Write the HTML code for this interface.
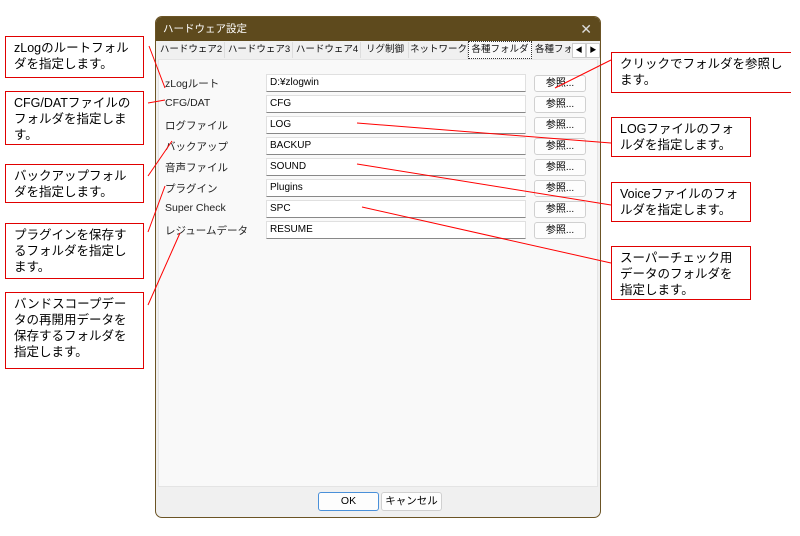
<!DOCTYPE html>
<html><head><meta charset="utf-8"><style>
body{margin:0;width:800px;height:536px;background:#fff;position:relative;overflow:hidden;font-family:"Liberation Sans","Noto Sans CJK JP",sans-serif;}
.box{position:absolute;border:1px solid #e00000;font-size:12.5px;line-height:16px;padding:3px 0 0 8px;box-sizing:border-box;color:#000;background:#fff;white-space:nowrap;overflow:hidden}
.dlg{position:absolute;left:155px;top:16px;width:446px;height:502px;border:1px solid #6b5425;border-radius:7px;background:#f0f0f0;box-sizing:border-box;overflow:hidden}
.title{height:24px;background:#5e4a1d;color:#fff;font-size:10.5px;line-height:24px;padding-left:7px;position:relative}
.title .x{position:absolute;right:8px;top:0;font-size:14px;color:#ddd}
.tabs{position:absolute;top:25px;left:2px;height:17px;font-size:9.5px;white-space:nowrap}
.tab{position:absolute;top:0;height:16px;line-height:16px;border-right:1px solid #ddd;color:#111;text-align:center;overflow:hidden}
.panel{position:absolute;left:2px;top:42px;width:438px;height:426px;background:#f9f9f9;border:1px solid #e4e4e4}
.lbl{position:absolute;left:6px;font-size:10.5px;color:#222}
.inp{position:absolute;left:107px;width:260px;height:18px;background:#fff;border:1px solid #e0e0e0;border-bottom:1px solid #888;box-sizing:border-box;font-size:10px;line-height:16px;padding-left:3px}
.btn{position:absolute;left:375px;width:52px;height:17px;background:#fdfdfd;border:1px solid #d0d0d0;border-radius:3px;box-sizing:border-box;font-size:10px;text-align:center;line-height:15px}
.fb{position:absolute;top:475px;height:19px;border-radius:3px;box-sizing:border-box;font-size:10.5px;text-align:center;line-height:17px;background:#fdfdfd}
</style></head><body>
<div class="dlg">
<div class="title">ハードウェア設定<span class="x">✕</span></div>
<div class="tabs">
<span class="tab" style="left:0px;width:66px">ハードウェア2</span>
<span class="tab" style="left:68px;width:66px">ハードウェア3</span>
<span class="tab" style="left:136px;width:66px">ハードウェア4</span>
<span class="tab" style="left:204px;width:46px">リグ制御</span>
<span class="tab" style="left:252px;width:57px">ネットワーク</span>
<span class="tab" style="left:310px;width:62px;border:1px dotted #333;background:#f9f9f9;top:-1px">各種フォルダ</span>
<span class="tab" style="left:377px;width:36px;border:none;text-align:left">各種フォ</span>
<span style="position:absolute;left:414px;top:1px;width:12px;height:13px;border:1px solid #ccc;background:#fff;font-size:7px;text-align:center;line-height:13px">◀</span>
<span style="position:absolute;left:428px;top:1px;width:12px;height:13px;border:1px solid #ccc;background:#fff;font-size:7px;text-align:center;line-height:13px">▶</span>
</div>
<div class="panel">
<div class="lbl" style="top:16px">zLogルート</div><div class="inp" style="top:14px">D:¥zlogwin</div><div class="btn" style="top:15px">参照...</div>
<div class="lbl" style="top:37px">CFG/DAT</div><div class="inp" style="top:35px">CFG</div><div class="btn" style="top:36px">参照...</div>
<div class="lbl" style="top:58px">ログファイル</div><div class="inp" style="top:56px">LOG</div><div class="btn" style="top:57px">参照...</div>
<div class="lbl" style="top:79px">バックアップ</div><div class="inp" style="top:77px">BACKUP</div><div class="btn" style="top:78px">参照...</div>
<div class="lbl" style="top:100px">音声ファイル</div><div class="inp" style="top:98px">SOUND</div><div class="btn" style="top:99px">参照...</div>
<div class="lbl" style="top:121px">プラグイン</div><div class="inp" style="top:119px">Plugins</div><div class="btn" style="top:120px">参照...</div>
<div class="lbl" style="top:142px">Super Check</div><div class="inp" style="top:140px">SPC</div><div class="btn" style="top:141px">参照...</div>
<div class="lbl" style="top:163px">レジュームデータ</div><div class="inp" style="top:161px">RESUME</div><div class="btn" style="top:162px">参照...</div>
</div>
<div class="fb" style="left:162px;width:61px;border:1px solid #4a90d9">OK</div>
<div class="fb" style="left:225px;width:61px;border:1px solid #d0d0d0">キャンセル</div>
</div>
<div class="box" style="left:5px;top:36px;width:139px;height:42px">zLogのルートフォル<br>ダを指定します。</div>
<div class="box" style="left:5px;top:91px;width:139px;height:54px">CFG/DATファイルの<br>フォルダを指定しま<br>す。</div>
<div class="box" style="left:5px;top:164px;width:139px;height:39px">バックアップフォル<br>ダを指定します。</div>
<div class="box" style="left:5px;top:223px;width:139px;height:56px">プラグインを保存す<br>るフォルダを指定し<br>ます。</div>
<div class="box" style="left:5px;top:292px;width:139px;height:77px">バンドスコープデー<br>タの再開用データを<br>保存するフォルダを<br>指定します。</div>
<div class="box" style="left:611px;top:52px;width:180px;height:41px;border-right:none">クリックでフォルダを参照し<br>ます。</div>
<div class="box" style="left:611px;top:117px;width:140px;height:40px">LOGファイルのフォ<br>ルダを指定します。</div>
<div class="box" style="left:611px;top:182px;width:140px;height:40px">Voiceファイルのフォ<br>ルダを指定します。</div>
<div class="box" style="left:611px;top:246px;width:140px;height:54px">スーパーチェック用<br>データのフォルダを<br>指定します。</div>
<svg width="800" height="536" style="position:absolute;left:0;top:0" stroke="#f00" stroke-width="1" fill="none">
<line x1="149" y1="46" x2="165" y2="88"/>
<line x1="148" y1="103" x2="165" y2="100"/>
<line x1="148" y1="176" x2="172" y2="141"/>
<line x1="148" y1="232" x2="165" y2="186"/>
<line x1="148" y1="305" x2="180" y2="233"/>
<line x1="555" y1="88" x2="611" y2="60"/>
<line x1="357" y1="123" x2="611" y2="143"/>
<line x1="357" y1="164" x2="611" y2="205"/>
<line x1="362" y1="207" x2="611" y2="263"/>
</svg>
</body></html>
